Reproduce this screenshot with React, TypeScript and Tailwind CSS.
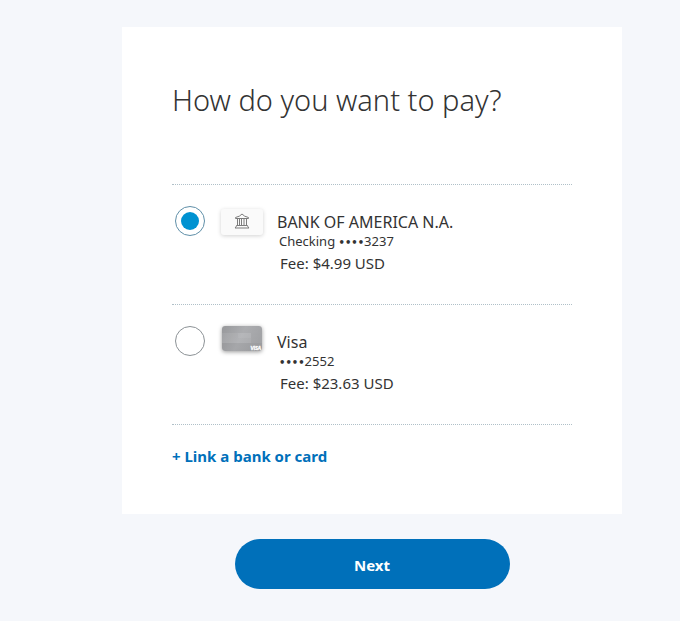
import { useState, type ReactNode } from 'react';

function BankIcon() {
  return (
    <span className="mt-[3px] flex h-[26px] w-[42px] items-center justify-center rounded-[3px] bg-[#fafafa] pb-[2px] shadow-[0_1px_4px_rgba(0,0,0,0.18)]">
      <svg width="16" height="16" viewBox="0 0 16 16" fill="none" stroke="#7c7c7c" strokeWidth="1" aria-hidden="true">
        <path d="M1.500 4.500Q6 3.500 8 1q2 2.500 6.500 3.500v1h-13z" strokeLinejoin="round" />
        <path d="M3.500 5.500v7M5.500 12.500v-7h2v7M10 5.500v7M12.500 5.500v7" />
        <path d="M2.500 12.500h11q.2 1.500 1.500 2.500H1q1.300-1 1.500-2.500z" strokeLinejoin="round" />
      </svg>
    </span>
  );
}

function VisaCardIcon() {
  return (
    <svg className="rounded-[3px] shadow-[0_1px_4px_rgba(0,0,0,0.4)]" width="40" height="25" viewBox="0 0 40 25" aria-hidden="true">
      <defs>
        <linearGradient id="card-face" x1="0" y1="0" x2="1" y2="0.300">
          <stop offset="0" stopColor="#97989b" />
          <stop offset="0.550" stopColor="#acadb0" />
          <stop offset="1" stopColor="#a2a3a6" />
        </linearGradient>
      </defs>
      <rect width="40" height="25" fill="url(#card-face)" />
      <path d="M0 7h29v10H0z" fill="#fff" opacity="0.080" />
      <path d="M16 7h13v5H16z" fill="#fff" opacity="0.060" />
      <path d="M0 17h40v8H0z" fill="#000" opacity="0.030" />
      <text x="39" y="24" textAnchor="end" fill="#fff" fontFamily="Lato, sans-serif" fontSize="5" fontWeight="900" fontStyle="italic" stroke="#fff" strokeWidth="0.300">
        VISA
      </text>
    </svg>
  );
}

type Option = { id: string; name: string; kind: string; digits: string; fee: string; icon: ReactNode };

const options: Option[] = [
  { id: 'bank', name: 'BANK OF AMERICA N.A.', kind: 'Checking ', digits: '3237', fee: 'Fee: $4.99 USD', icon: <BankIcon /> },
  { id: 'visa', name: 'Visa', kind: '', digits: '2552', fee: 'Fee: $23.63 USD', icon: <VisaCardIcon /> },
];

export default function App() {
  const [selected, setSelected] = useState('bank');

  return (
    <main className="bg-[#f5f7fb] pt-[27px] pb-8 pl-16 font-['Noto_Sans',sans-serif] text-[#333]">
      <form className="mx-auto max-w-[500px]" onSubmit={(e) => e.preventDefault()}>
        <section className="bg-white px-[50px] pt-[53px] pb-[46px]">
          <h1 id="pay-title" className="text-[29px] leading-10 font-light">
            How do you want to pay?
          </h1>
          <fieldset aria-labelledby="pay-title" className="mt-16 border-b border-dotted border-[#b0c0c8]">
            {options.map((o) => (
              <label key={o.id} className="flex h-[120px] cursor-pointer items-start border-t border-dotted border-[#b0c0c8] pt-[21px] pl-[3px]">
                <input
                  type="radio"
                  name="method"
                  value={o.id}
                  checked={selected === o.id}
                  onChange={() => setSelected(o.id)}
                  className="size-[30px] shrink-0 appearance-none rounded-full border border-[#8c9296] bg-white bg-clip-content p-[5px] checked:border-[#5f8fa8] checked:bg-[#0092d1]"
                />
                <span className="flex w-[72px] shrink-0 justify-center pl-[2px]">{o.icon}</span>
                <span className="flex flex-col pt-[7px]">
                  <span className="text-[16px] leading-[18px]">{o.name}</span>
                  <span className="pl-[2px] text-[13px] leading-5 whitespace-pre">
                    {o.kind}
                    <span className="font-['DejaVu_Sans',sans-serif] text-[10px] leading-none font-bold">••••</span>
                    {o.digits}
                  </span>
                  <span className="pl-[3px] text-[15px] leading-6">{o.fee}</span>
                </span>
              </label>
            ))}
          </fieldset>
          <a href="#link" className="mt-[19px] block text-[15px] leading-6 font-bold text-[#0070ba]">
            + Link a bank or card
          </a>
        </section>
        <button type="submit" className="mx-auto mt-[25px] block h-[50px] w-[275px] rounded-full bg-[#0070ba] pt-[2px] text-[15px] font-bold text-white">
          Next
        </button>
      </form>
    </main>
  );
}
